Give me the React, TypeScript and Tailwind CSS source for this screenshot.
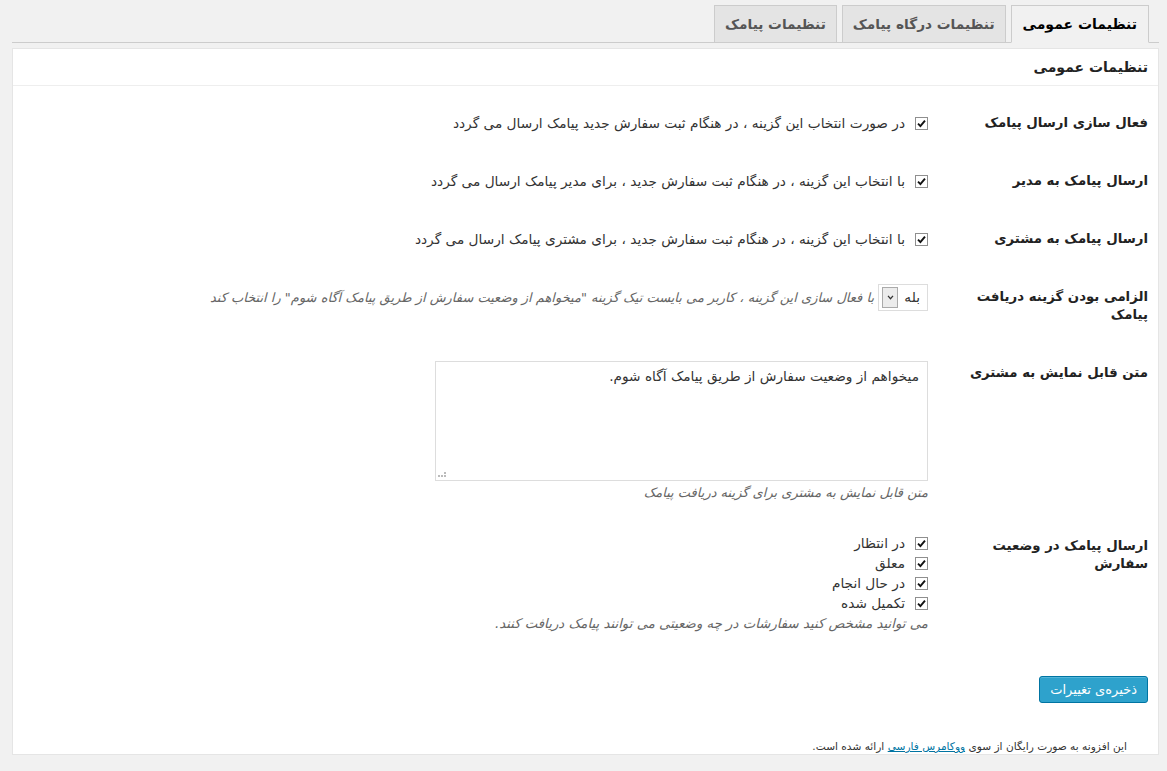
import React from 'react';

const font = { fontFamily: '"DejaVu Sans", Tahoma, sans-serif' };

const Check = () => (
  <span className="inline-flex h-[13px] w-[13px] shrink-0 items-center justify-center border border-[#8f8f8f] bg-white">
    <svg viewBox="0 0 12 12" className="h-[11px] w-[11px]">
      <path d="M2.2 6.2 L4.8 8.8 L9.8 2.8" fill="none" stroke="#111" strokeWidth="2.1" />
    </svg>
  </span>
);

const Row: React.FC<{ label: React.ReactNode; children: React.ReactNode }> = ({ label, children }) => (
  <div className="flex">
    <div className="w-[210px] shrink-0 pl-[10px] py-[20px] text-[13.3px] font-bold leading-[18px] text-[#222]">{label}</div>
    <div className="flex-1 pr-[10px] py-[15px]">{children}</div>
  </div>
);

const CheckLine = ({ text }: { text: string }) => (
  <div className="flex h-[28px] items-center gap-[10px] text-[13.7px] text-[#333]">
    <Check />
    <span>{text}</span>
  </div>
);

const Tab = ({ text, active }: { text: string; active?: boolean }) => (
  <div
    className={
      active
        ? '-mb-px flex h-[38px] items-center border border-[#ccc] border-b-[#f1f1f1] bg-[#f1f1f1] px-[11px] text-[14px] font-bold text-[#000]'
        : '-mb-px flex h-[38px] items-center border border-[#ccc] bg-[#e4e4e4] px-[10px] text-[13.7px] font-bold text-[#555]'
    }
  >
    {text}
  </div>
);

export default function App() {
  const statuses = ['در انتظار', 'معلق', 'در حال انجام', 'تکمیل شده'];

  return (
    <div dir="rtl" style={font} className="min-h-[771px] bg-[#f1f1f1] pr-[8px] pl-[12px] pt-[5px]">
      <div className="flex gap-[5px] border-b border-[#ccc] pr-[10px]">
        <Tab text="تنظیمات عمومی" active />
        <Tab text="تنظیمات درگاه پیامک" />
        <Tab text="تنظیمات پیامک" />
      </div>

      <div className="mt-[5px] border border-[#e5e5e5] bg-white">
        <div className="border-b border-[#eee] px-[10px] py-[9px] text-[14px] font-bold leading-[18px] text-[#222]">
          تنظیمات عمومی
        </div>

        <div className="px-[10px] pt-[8px]">
          <Row label="فعال سازی ارسال پیامک">
            <CheckLine text="در صورت انتخاب این گزینه ، در هنگام ثبت سفارش جدید پیامک ارسال می گردد" />
          </Row>
          <Row label="ارسال پیامک به مدیر">
            <CheckLine text="با انتخاب این گزینه ، در هنگام ثبت سفارش جدید ، برای مدیر پیامک ارسال می گردد" />
          </Row>
          <Row label="ارسال پیامک به مشتری">
            <CheckLine text="با انتخاب این گزینه ، در هنگام ثبت سفارش جدید ، برای مشتری پیامک ارسال می گردد" />
          </Row>
          <Row
            label={
              <>
                الزامی بودن گزینه دریافت
                <br />
                پیامک
              </>
            }
          >
            <div className="flex items-center gap-[4px] pt-[1px]">
              <div className="flex h-[27px] w-[50px] items-center justify-between border border-[#ddd] bg-white pr-[7px] pl-[3px] text-[13.7px] text-[#333]">
                <span>بله</span>
                <span className="flex h-[21px] w-[16px] items-center justify-center border border-[#aaa] bg-[#ececec]">
                  <svg viewBox="0 0 8 6" className="h-[5px] w-[7px]">
                    <path d="M1 1 L4 4.5 L7 1" fill="none" stroke="#333" strokeWidth="1.5" />
                  </svg>
                </span>
              </div>
              <span className="text-[13px] italic text-[#666]">
                با فعال سازی این گزینه ، کاربر می بایست تیک گزینه "میخواهم از وضعیت سفارش از طریق پیامک آگاه شوم" را انتخاب کند
              </span>
            </div>
          </Row>
          <Row label="متن قابل نمایش به مشتری">
            <div className="relative mt-[2px] h-[120px] w-[493px] border border-[#ddd] bg-white px-[8px] py-[5px] text-[13.7px] leading-[18px] text-[#333]">
              میخواهم از وضعیت سفارش از طریق پیامک آگاه شوم.
              <span className="absolute bottom-[3px] left-[2px] grid grid-cols-3 gap-[1px]">
                <span className="h-[2px] w-[2px]" />
                <span className="h-[2px] w-[2px]" />
                <span className="h-[2px] w-[2px]" />
                <span className="h-[2px] w-[2px] bg-[#bbb]" />
                <span className="h-[2px] w-[2px]" />
                <span className="h-[2px] w-[2px]" />
                <span className="h-[2px] w-[2px] bg-[#bbb]" />
                <span className="h-[2px] w-[2px] bg-[#bbb]" />
                <span className="h-[2px] w-[2px] bg-[#bbb]" />
              </span>
            </div>
            <div className="mt-[3px] text-[13px] italic leading-[18px] text-[#666]">
              متن قابل نمایش به مشتری برای گزینه دریافت پیامک
            </div>
          </Row>
          <Row
            label={
              <>
                ارسال پیامک در وضعیت
                <br />
                سفارش
              </>
            }
          >
            <div className="flex flex-col pt-[1px]">
              {statuses.map((s) => (
                <div key={s} className="flex h-[20px] items-center gap-[10px] text-[13.7px] text-[#333]">
                  <Check />
                  <span>{s}</span>
                </div>
              ))}
            </div>
            <div className="text-[13.3px] italic leading-[21px] text-[#666]">
              می توانید مشخص کنید سفارشات در چه وضعیتی می توانند پیامک دریافت کنند.
            </div>
          </Row>

          <div className="flex pt-[27px]">
            <button className="h-[27px] rounded-[3px] border border-[#0074a2] bg-[#2ea2cc] px-[10px] text-[13px] text-white shadow-[inset_0_1px_0_rgba(120,200,230,0.5)]">
              ذخیره‌ی تغییرات
            </button>
          </div>

          <div className="pt-[35px] pr-[21px] text-[10.6px] leading-[16px] text-[#333]">
            این افزونه به صورت رایگان از سوی{' '}
            <a className="text-[#0074a2] underline">ووکامرس فارسی</a> ارائه شده است.
          </div>
        </div>
      </div>
    </div>
  );
}
